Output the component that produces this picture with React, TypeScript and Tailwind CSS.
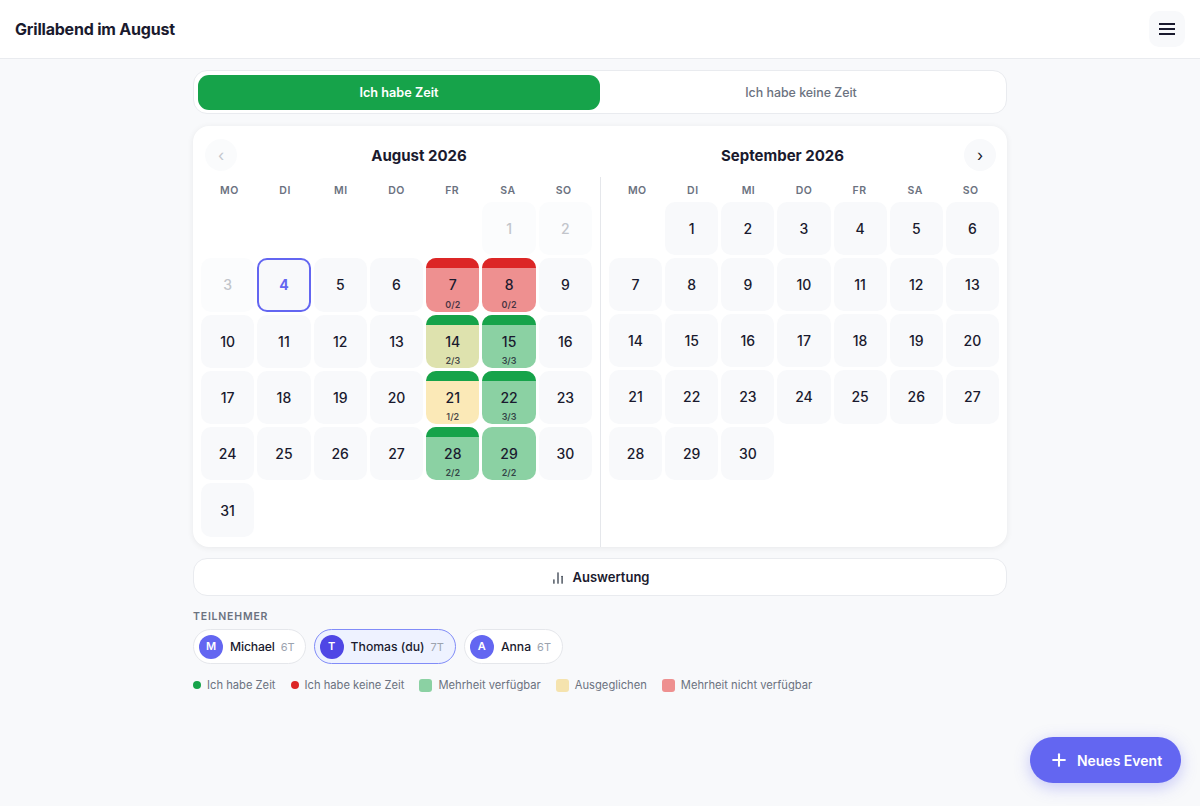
import { ChartNoAxesColumn, Plus } from "lucide-react";

type Cell = {
  d: number;
  past?: boolean;
  today?: boolean;
  bg?: string;
  bar?: string;
  sub?: string;
};

const RED = "bg-[#ee9090]";
const GREEN = "bg-[#8bd1a3]";
const YELLOW = "bg-[#fbe9b7]";
const MIX = "bg-[#dee2ae]";
const BAR_G = "bg-[#16a34a]";
const BAR_R = "bg-[#dc2626]";

const special: Record<number, Partial<Cell>> = {
  1: { past: true },
  2: { past: true },
  3: { past: true },
  4: { today: true },
  7: { bg: RED, bar: BAR_R, sub: "0/2" },
  8: { bg: RED, bar: BAR_R, sub: "0/2" },
  14: { bg: MIX, bar: BAR_G, sub: "2/3" },
  15: { bg: GREEN, bar: BAR_G, sub: "3/3" },
  21: { bg: YELLOW, bar: BAR_G, sub: "1/2" },
  22: { bg: GREEN, bar: BAR_G, sub: "3/3" },
  28: { bg: GREEN, bar: BAR_G, sub: "2/2" },
  29: { bg: GREEN, sub: "2/2" },
};

const DAYS = ["MO", "DI", "MI", "DO", "FR", "SA", "SO"];

function Day({ c }: { c: Cell }) {
  if (c.today) {
    return (
      <div className="aspect-square rounded-[10px] border-2 border-[#6366f1] bg-[#f8f9fb] flex items-center justify-center text-[14px] font-bold text-[#6366f1]">
        {c.d}
      </div>
    );
  }
  return (
    <div
      className={`relative aspect-square overflow-hidden rounded-[10px] flex items-center justify-center text-[14px] font-medium ${
        c.past ? "bg-[#fbfcfd] text-[#c2c5cb]" : `${c.bg ?? "bg-[#f8f9fb]"} text-[#1a1a2e]`
      }`}
    >
      {c.bar && <div className={`absolute inset-x-0 top-0 h-[10px] ${c.bar}`} />}
      {c.d}
      {c.sub && (
        <span className="absolute inset-x-0 bottom-[1px] text-center text-[9px] leading-[12px] font-semibold text-[#1a1a2e]/80">
          {c.sub}
        </span>
      )}
    </div>
  );
}

function Month({
  offset,
  count,
  marks,
}: {
  offset: number;
  count: number;
  marks: boolean;
}) {
  const blanks = Array.from({ length: offset });
  const days = Array.from({ length: count }, (_, i) => i + 1);
  return (
    <>
      <div className="grid grid-cols-7 gap-[3px] px-[2px] mb-[3px]">
        {DAYS.map((d) => (
          <div
            key={d}
            className="h-[22px] pt-[6px] flex items-center justify-center text-[10.5px] font-semibold tracking-[0.5px] text-[#6b7280]"
          >
            {d}
          </div>
        ))}
      </div>
      <div className="grid grid-cols-7 gap-[3px]">
        {blanks.map((_, i) => (
          <div key={i} />
        ))}
        {days.map((d) => (
          <Day key={d} c={{ d, ...(marks ? special[d] : {}) }} />
        ))}
      </div>
    </>
  );
}

function Chip({
  letter,
  name,
  days,
  me,
  tight,
}: {
  letter: string;
  name: string;
  days: string;
  me?: boolean;
  tight?: boolean;
}) {
  return (
    <div
      className={`h-[35px] flex items-center gap-[6px] rounded-full border pl-[5px] ${
        tight ? "pr-[10px]" : "pr-[11px]"
      } ${me ? "border-[#818cf8] bg-[#eef2ff]" : "border-[#e5e7eb] bg-white"}`}
    >
      <div
        className={`h-[24px] w-[24px] rounded-full flex items-center justify-center text-[11px] font-semibold text-white ${
          me ? "bg-[#4f46e5]" : "bg-[#6366f1]"
        }`}
      >
        {letter}
      </div>
      <span
        className={`ml-px pt-px text-[12.2px] font-medium text-[#1a1a2e] ${
          tight ? "tracking-[-0.15px]" : ""
        }`}
      >
        {name}
      </span>
      <span className="pt-px text-[11px] text-[#9ca3af]">{days}</span>
    </div>
  );
}

function Legend({ swatch, label }: { swatch: string; label: string }) {
  return (
    <div className="flex items-center gap-[6px]">
      <span className={swatch} />
      <span>{label}</span>
    </div>
  );
}

export default function App() {
  return (
    <div
      className="relative min-h-[806px] bg-[#f8f9fb] text-[#1a1a2e]"
      style={{ fontFamily: "Inter, 'Liberation Sans', sans-serif" }}
    >
      <header className="h-[59px] bg-white border-b border-[#e9ebef] flex items-center justify-between pl-[15px] pr-[15px]">
        <h1 className="text-[16px] font-bold tracking-[-0.2px]">Grillabend im August</h1>
        <button className="h-[36px] w-[36px] rounded-[10px] bg-[#f8f9fb] flex items-center justify-center">
          <svg width="20" height="20" viewBox="0 0 20 20" fill="none" stroke="#1a1a2e" strokeWidth="2">
            <path d="M2 5h16M2 10h16M2 15h16" />
          </svg>
        </button>
      </header>

      <main className="mx-auto w-[814px] pt-[11px]">
        <div className="h-[44px] flex rounded-[14px] border border-[#e9ebef] bg-white pt-[4px] px-[4px] pb-[3px]">
          <div className="flex-1 rounded-[11px] bg-[#16a34a] flex items-center justify-center text-[12.7px] font-semibold text-white">
            Ich habe Zeit
          </div>
          <div className="flex-1 flex items-center justify-center pt-px text-[12.4px] font-medium text-[#6b7280]">
            Ich habe keine Zeit
          </div>
        </div>

        <section className="mt-[12px] rounded-[16px] bg-white shadow-[0_1px_6px_rgba(0,0,0,0.07)] flex h-[421px]">
          <div className="w-[408px] flex flex-col pt-[13px]">
            <div className="h-[32px] ml-[12px] flex items-center">
              <button className="h-[32px] w-[32px] rounded-full bg-[#f8f9fb]/70 flex items-center justify-center text-[16px] text-[#c4c7cd]">
                ‹
              </button>
              <div className="w-[364px] pt-[2px] text-center text-[15px] font-bold text-[#1a1a2e]">
                August 2026
              </div>
            </div>
            <div className="flex-1 mt-[6px] border-r border-[#e5e7eb] pl-[8px] pr-[8px]">
              <Month offset={5} count={31} marks />
            </div>
          </div>
          <div className="w-[406px] flex flex-col pt-[13px]">
            <div className="h-[32px] mr-[11px] flex items-center justify-end">
              <div className="w-[363px] pt-[2px] text-center text-[15px] font-bold text-[#1a1a2e]">
                September 2026
              </div>
              <button className="h-[32px] w-[32px] rounded-full bg-[#f8f9fb] flex items-center justify-center text-[16px] text-[#1a1a2e]">
                ›
              </button>
            </div>
            <div className="flex-1 mt-[6px] px-[8px]">
              <Month offset={1} count={30} marks={false} />
            </div>
          </div>
        </section>

        <button className="mt-[11px] h-[38px] pt-[1px] w-full rounded-[14px] border border-[#e9ebef] bg-white flex items-center justify-center gap-[8px] text-[13px] font-semibold text-[#1a1a2e]">
          <ChartNoAxesColumn size={14} strokeWidth={2} className="text-[#1f2937]" />
          Auswertung
        </button>

        <div className="mt-[14px] text-[10.5px] leading-[13px] font-semibold tracking-[0.8px] text-[#6b7280]">
          TEILNEHMER
        </div>
        <div className="mt-[6px] flex gap-[8px]">
          <Chip letter="M" name="Michael" days="6T" tight />
          <Chip letter="T" name="Thomas (du)" days="7T" me />
          <Chip letter="A" name="Anna" days="6T" />
        </div>

        <div className="mt-[13px] flex items-center gap-[15px] text-[11.2px] text-[#6b7280]">
          <Legend swatch="h-[8px] w-[8px] rounded-full bg-[#16a34a]" label="Ich habe Zeit" />
          <Legend swatch="h-[8px] w-[8px] rounded-full bg-[#dc2626]" label="Ich habe keine Zeit" />
          <Legend swatch="h-[13px] w-[13px] rounded-[3px] bg-[#8bd1a3]" label="Mehrheit verfügbar" />
          <Legend swatch="h-[13px] w-[13px] rounded-[3px] bg-[#f5e3ae]" label="Ausgeglichen" />
          <Legend swatch="h-[13px] w-[13px] rounded-[3px] bg-[#ee9090]" label="Mehrheit nicht verfügbar" />
        </div>
      </main>

      <button className="absolute right-[19px] top-[737px] h-[46px] w-[151px] rounded-full bg-[#6366f1] shadow-[0_4px_16px_rgba(99,102,241,0.35)] flex items-center justify-center gap-[8px] text-[14px] font-semibold text-white">
        <Plus size={20} strokeWidth={2.5} />
        Neues Event
      </button>
    </div>
  );
}
